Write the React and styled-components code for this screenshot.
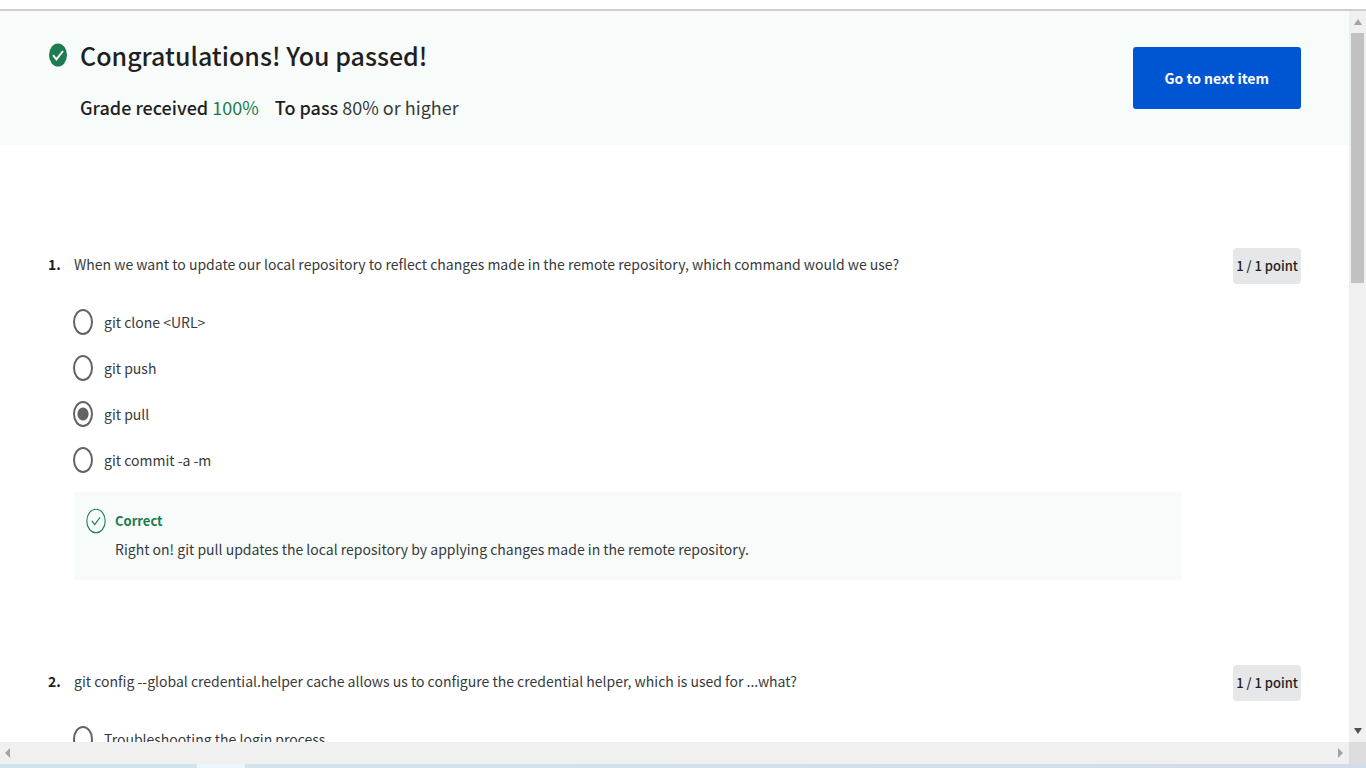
import React from "react";
import styled, { createGlobalStyle, css } from "styled-components";

const GlobalStyle = createGlobalStyle`
  *, *::before, *::after { box-sizing: border-box; }
  body {
    margin: 0;
    background: #fff;
    color: #373a3c;
    font-family: "Noto Sans CJK SC", "Noto Sans", sans-serif;
    font-size: 14px;
    line-height: 24px;
  }
  h1, h2, p, ol, fieldset { margin: 0; padding: 0; border: 0; }
`;

const Window = styled.div`
  display: flex;
  flex-direction: column;
  height: 100vh;
  overflow: hidden;
`;

const TopEdge = styled.div`
  flex: none;
  height: 11px;
  border-bottom: 2px solid #cfcfcf;
`;

const Viewport = styled.div`
  flex: 1;
  display: flex;
  min-height: 0;
`;

const Page = styled.main`
  flex: 1;
  min-width: 0;
  overflow: hidden;
`;

const Banner = styled.header`
  display: flex;
  justify-content: space-between;
  align-items: flex-start;
  height: 134px;
  padding: 24px 48px 0;
  background: #f7fbf9;
`;

const Result = styled.div`
  display: grid;
  grid-template-columns: 20px auto;
  column-gap: 12px;
`;

const PassedIcon = styled.svg`
  width: 20px;
  height: 24px;
  margin-top: 8px;
`;

const Title = styled.h1`
  color: #1f1f1f;
  font-size: 25px;
  font-weight: 500;
  line-height: 40px;
`;

const Grades = styled.p`
  grid-column: 2;
  display: flex;
  gap: 16px;
  margin-top: 16px;
  font-size: 18px;
  line-height: 32px;

  strong { color: #1f1f1f; font-weight: 500; }
`;

const Score = styled.span`
  color: #1d7c50;
`;

const NextButton = styled.button`
  height: 62px;
  margin-top: 12px;
  padding: 0 32px;
  border: 0;
  border-radius: 3px;
  background: #0056d2;
  color: #fff;
  font: inherit;
  font-weight: 700;
`;

const Questions = styled.ol`
  list-style: none;
  display: flex;
  flex-direction: column;
  gap: 85px;
  padding: 103px 48px 0;
`;

const Question = styled.li`
  display: grid;
  grid-template-columns: 26px 1fr 120px;
`;

const QuestionNumber = styled.span`
  padding-top: 4px;
  color: #1f1f1f;
  font-weight: 700;
`;

const Prompt = styled.h2`
  padding-top: 4px;
  font-size: 14px;
  font-weight: 400;
  line-height: 24px;
`;

const Points = styled.span`
  justify-self: end;
  display: flex;
  align-items: center;
  justify-content: center;
  height: 36px;
  padding: 0 3px;
  border-radius: 4px;
  background: #e5e7e8;
  color: #1f1f1f;
  font-size: 13px;
  font-weight: 500;
  white-space: nowrap;
`;

const Options = styled.fieldset`
  grid-column: 2;
  display: flex;
  flex-direction: column;
  gap: 20px;
  min-width: 0;
  padding: 25px 0 19px;
`;

const Option = styled.label`
  display: flex;
  align-items: center;
  gap: 11px;
  height: 26px;
`;

const Radio = styled.input`
  appearance: none;
  flex: none;
  width: 20px;
  height: 26px;
  margin: 0 0 0 -1px;
  border: 2px solid #636363;
  border-radius: 50%;
  background: #fff;

  &:checked {
    background: radial-gradient(ellipse 6px 7px at center, #636363 85%, #fff 100%);
  }
`;

const Feedback = styled.section`
  grid-column: 2;
  display: grid;
  grid-template-columns: 20px auto;
  column-gap: 9px;
  align-content: start;
  height: 88px;
  padding: 16px 12px;
  background: #f7fbf9;
`;

const CorrectIcon = styled.svg`
  width: 20px;
  height: 26px;
`;

const Verdict = styled.strong`
  color: #1d7c50;
  font-size: 13px;
  line-height: 26px;
`;

const Explanation = styled.p`
  grid-column: 2;
  line-height: 30px;
`;

const bar = css`
  flex: none;
  display: flex;
  align-items: center;
  justify-content: space-between;
  background: #f0f0f0;
`;

const VerticalBar = styled.div`
  ${bar}
  flex-direction: column;
  justify-content: flex-start;
  width: 17px;
  padding: 8px 0 8px;

  svg:last-child { margin-top: auto; }
`;

const Thumb = styled.div`
  width: 13px;
  height: 250px;
  margin-top: 8px;
  background: #c1c1c1;
`;

const HorizontalBar = styled.div`
  ${bar}
  height: 22px;
  padding-left: 5px;
`;

const BarEnd = styled.div`
  display: flex;
  align-items: center;
  gap: 6px;
  height: 100%;
`;

const Corner = styled.div`
  width: 17px;
  height: 100%;
  background: #dcdcdc;
`;

const Taskbar = styled.div`
  flex: none;
  height: 4px;
  background: linear-gradient(90deg, #d0e4ec 197px, #edf6fa 197px 245px, #d0e4ec 245px, #d3dcea);
`;

function Arrow({ width, height, points, fill = "#a3a3a3" }) {
  return (
    <svg width={width} height={height} viewBox={`0 0 ${width} ${height}`} aria-hidden="true">
      <polygon points={points} fill={fill} />
    </svg>
  );
}

const questions = [
  {
    prompt:
      "When we want to update our local repository to reflect changes made in the remote repository, which command would we use?",
    options: ["git clone <URL>", "git push", "git pull", "git commit -a -m"],
    selected: 2,
    feedback:
      "Right on! git pull updates the local repository by applying changes made in the remote repository.",
  },
  {
    prompt:
      "git config --global credential.helper cache allows us to configure the credential helper, which is used for ...what?",
    options: ["Troubleshooting the login process"],
  },
];

export default function App() {
  return (
    <Window>
      <GlobalStyle />
      <TopEdge />
      <Viewport>
        <Page>
          <Banner>
            <Result>
              <PassedIcon viewBox="0 0 20 24" preserveAspectRatio="none" aria-hidden="true">
                <ellipse cx="10" cy="12" rx="9" ry="11.6" fill="#1d7c50" />
                <path d="M5 12.2 8.4 16.3 15 8" fill="none" stroke="#fff" strokeWidth="2" />
              </PassedIcon>
              <Title>Congratulations! You passed!</Title>
              <Grades>
                <span><strong>Grade received</strong> <Score>100%</Score></span>
                <span><strong>To pass</strong> 80% or higher</span>
              </Grades>
            </Result>
            <NextButton type="button">Go to next item</NextButton>
          </Banner>
          <Questions>
            {questions.map((q, n) => (
              <Question key={q.prompt}>
                <QuestionNumber>{n + 1}.</QuestionNumber>
                <Prompt id={`prompt-${n}`}>{q.prompt}</Prompt>
                <Points>1 / 1 point</Points>
                <Options aria-labelledby={`prompt-${n}`}>
                  {q.options.map((text, i) => (
                    <Option key={text}>
                      <Radio type="radio" name={`question-${n}`} defaultChecked={q.selected === i} />
                      {text}
                    </Option>
                  ))}
                </Options>
                {q.feedback && (
                  <Feedback>
                    <CorrectIcon viewBox="0 0 20 26" aria-hidden="true">
                      <ellipse cx="10" cy="13" rx="9.2" ry="11.8" fill="none" stroke="#1d7c50" strokeWidth="1.1" />
                      <path d="M5.8 12.8 8.7 16.6 14 9.4" fill="none" stroke="#1d7c50" strokeWidth="1.1" />
                    </CorrectIcon>
                    <Verdict>Correct</Verdict>
                    <Explanation>{q.feedback}</Explanation>
                  </Feedback>
                )}
              </Question>
            ))}
          </Questions>
        </Page>
        <VerticalBar>
          <Arrow width={8} height={6} points="0,6 4,0 8,6" />
          <Thumb />
          <Arrow width={8} height={6} points="0,0 8,0 4,6" fill="#505050" />
        </VerticalBar>
      </Viewport>
      <HorizontalBar>
        <Arrow width={5} height={10} points="5,0 0,5 5,10" />
        <BarEnd>
          <Arrow width={5} height={10} points="0,0 5,5 0,10" />
          <Corner />
        </BarEnd>
      </HorizontalBar>
      <Taskbar />
    </Window>
  );
}
